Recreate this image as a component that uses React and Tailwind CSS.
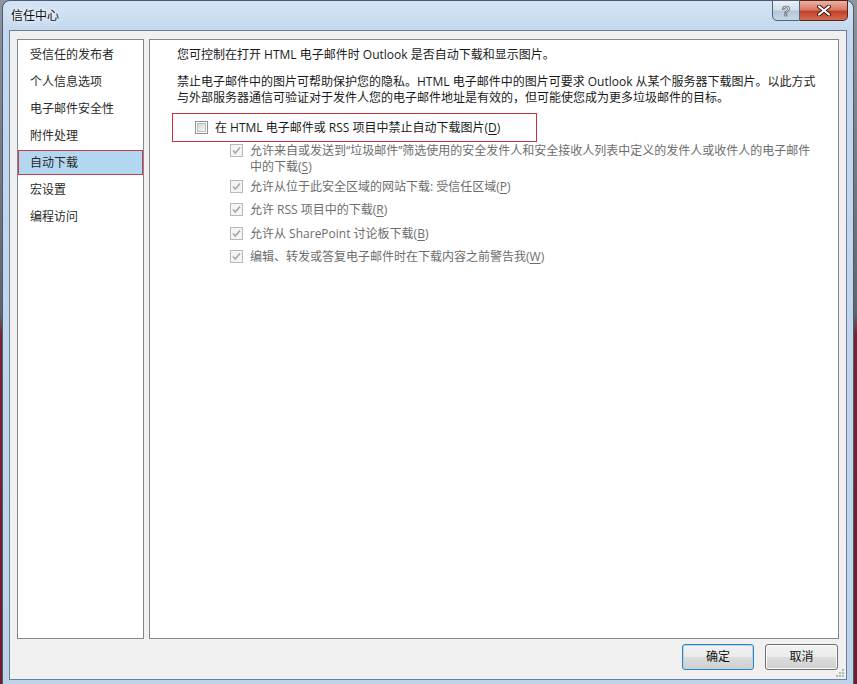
import React from "react";

const FONT = { fontFamily: '"Open Sans", "Noto Sans CJK SC", sans-serif' };

function Unchecked() {
  return (
    <span className="w-[13px] h-[13px] shrink-0 border border-[#8e8f8f] bg-white flex items-center justify-center">
      <span className="w-[9px] h-[9px] border border-[#b9bcc0] bg-[linear-gradient(135deg,#d3d6da,#f7f7f7)]" />
    </span>
  );
}

function DisabledChecked() {
  return (
    <span className="w-[13px] h-[13px] shrink-0 border border-[#b8b8b8] bg-[#f4f4f4] flex items-center justify-center">
      <svg width="11" height="11" viewBox="0 0 11 11">
        <path d="M2 5.5 L4.3 8 L9 2.5" fill="none" stroke="#a8a8a8" strokeWidth="1.6" />
      </svg>
    </span>
  );
}

function Acc({ children }) {
  return <span className="underline underline-offset-[2px]">{children}</span>;
}

function SubItem({ children, className = "" }) {
  return (
    <div className={"flex items-start gap-[7px] " + className}>
      <span className="mt-[1px]">
        <DisabledChecked />
      </span>
      <div className="leading-[16px] text-[#6d6d6d]">{children}</div>
    </div>
  );
}

const navItems = ["受信任的发布者", "个人信息选项", "电子邮件安全性", "附件处理", "自动下载", "宏设置", "编程访问"];

export default function App() {
  return (
    <div
      className="w-[857px] h-[684px] overflow-hidden bg-[linear-gradient(180deg,#8d949c_0%,#5d636b_46%,#7a2232_49%,#6e1c2a_100%)] text-[12px]"
      style={FONT}
    >
      <div className="ml-[2px] w-[852px] h-[692px] rounded-t-[8px] border border-[#4a5c72] bg-[linear-gradient(180deg,#d4e4f4_0px,#c3d8ee_30px,#bdd3ea_100%)] flex flex-col">
        {/* title bar */}
        <div className="h-[29px] flex items-start shrink-0">
          <span className="ml-[8px] mt-[7px] leading-[16px] text-[#111] [text-shadow:0_0_8px_#ffffff,0_0_4px_#ffffff]">
            信任中心
          </span>
          <div className="ml-auto mr-[5px] -mt-[1px] flex h-[21px]">
            <div className="w-[28px] h-[21px] rounded-bl-[5px] border border-[#4f6479] bg-[linear-gradient(180deg,#e9f0f7_0%,#d3dfeb_45%,#b6c7d9_55%,#c8d6e4_100%)] flex items-center justify-center">
              <span className="text-white font-bold text-[14px] leading-none [-webkit-text-stroke:0.6px_#2e3c4c]" style={{ fontFamily: '"Liberation Sans", sans-serif' }}>
                ?
              </span>
            </div>
            <div className="w-[48px] h-[21px] rounded-br-[5px] border border-l-0 border-[#5a2118] bg-[linear-gradient(180deg,#eab3a6_0%,#dc7a66_45%,#c2412b_55%,#d46a52_100%)] flex items-center justify-center">
              <svg width="14" height="11" viewBox="0 0 14 11">
                <path d="M2 1.5 L12 9.5 M12 1.5 L2 9.5" stroke="#3a1410" strokeWidth="4" strokeLinecap="round" />
                <path d="M2 1.5 L12 9.5 M12 1.5 L2 9.5" stroke="#ffffff" strokeWidth="2.2" strokeLinecap="round" />
              </svg>
            </div>
          </div>
        </div>

        {/* client area */}
        <div className="mx-[6px] h-[650px] shrink-0 border border-[#6a7f96] bg-[#f0f0f0] flex flex-col pt-[8px] px-[7px] pb-[8px] relative">
          <div className="flex gap-[5px] h-[600px]">
            {/* left nav */}
            <div className="w-[127px] h-full border border-[#828790] bg-white pt-[2px] text-[#2a2a2a]">
              {navItems.map((t) => (
                <div
                  key={t}
                  className={
                    "h-[25px] mb-[2px] flex items-center pl-[11px] leading-[16px] border " +
                    (t === "自动下载" ? "bg-[#b3d6f1] border-[#c63d50]" : "border-transparent")
                  }
                >
                  {t}
                </div>
              ))}
            </div>

            {/* right panel */}
            <div className="w-[690px] h-full border border-[#828790] bg-white pt-[7px] pl-[22px] text-[#1a1a1a]">
              <div className="ml-[5px] leading-[16px]">您可控制在打开 HTML 电子邮件时 Outlook 是否自动下载和显示图片。</div>
              <div className="ml-[5px] mt-[11px] leading-[16px]">
                禁止电子邮件中的图片可帮助保护您的隐私。HTML 电子邮件中的图片可要求 Outlook 从某个服务器下载图片。以此方式
                <br />
                与外部服务器通信可验证对于发件人您的电子邮件地址是有效的，但可能使您成为更多垃圾邮件的目标。
              </div>

              <div className="mt-[7px] w-[365px] h-[29px] border border-[#c8323c] flex items-center pl-[22px] gap-[7px]">
                <Unchecked />
                <span className="leading-[16px]">
                  在 HTML 电子邮件或 RSS 项目中禁止自动下载图片(<Acc>D</Acc>)
                </span>
              </div>

              <div className="pl-[58px] mt-[1px]">
                <SubItem>
                  允许来自或发送到“垃圾邮件”筛选使用的安全发件人和安全接收人列表中定义的发件人或收件人的电子邮件
                  <br />
                  中的下载(<Acc>S</Acc>)
                </SubItem>
                <SubItem className="mt-[4px]">
                  允许从位于此安全区域的网站下载: 受信任区域(<Acc>P</Acc>)
                </SubItem>
                <SubItem className="mt-[7px]">
                  允许 RSS 项目中的下载(<Acc>R</Acc>)
                </SubItem>
                <SubItem className="mt-[8px]">
                  允许从 SharePoint 讨论板下载(<Acc>B</Acc>)
                </SubItem>
                <SubItem className="mt-[7px]">
                  编辑、转发或答复电子邮件时在下载内容之前警告我(<Acc>W</Acc>)
                </SubItem>
              </div>
            </div>
          </div>

          {/* buttons */}
          <div className="mt-[5px] h-[26px] flex justify-end gap-[11px] pr-[1px]">
            <button className="w-[72px] h-[26px] rounded-[3px] border border-[#3c7fb1] bg-[linear-gradient(180deg,#f2f2f2_0%,#ebebeb_48%,#dddddd_52%,#cfcfcf_100%)] shadow-[inset_0_0_0_1px_#a8daf3] text-[12px] text-[#111] leading-none">
              确定
            </button>
            <button className="w-[73px] h-[26px] rounded-[3px] border border-[#707070] bg-[linear-gradient(180deg,#f2f2f2_0%,#ebebeb_48%,#dddddd_52%,#cfcfcf_100%)] shadow-[inset_0_0_0_1px_#fbfbfb] text-[12px] text-[#111] leading-none">
              取消
            </button>
          </div>

          {/* resize grip */}
          <svg className="absolute right-[1px] bottom-[1px]" width="10" height="10" viewBox="0 0 10 10">
            {[[7, 1], [4, 4], [7, 4], [1, 7], [4, 7], [7, 7]].map(([x, y], i) => (
              <rect key={i} x={x} y={y} width="2" height="2" fill="#b5b5b5" />
            ))}
          </svg>
        </div>
      </div>
    </div>
  );
}
